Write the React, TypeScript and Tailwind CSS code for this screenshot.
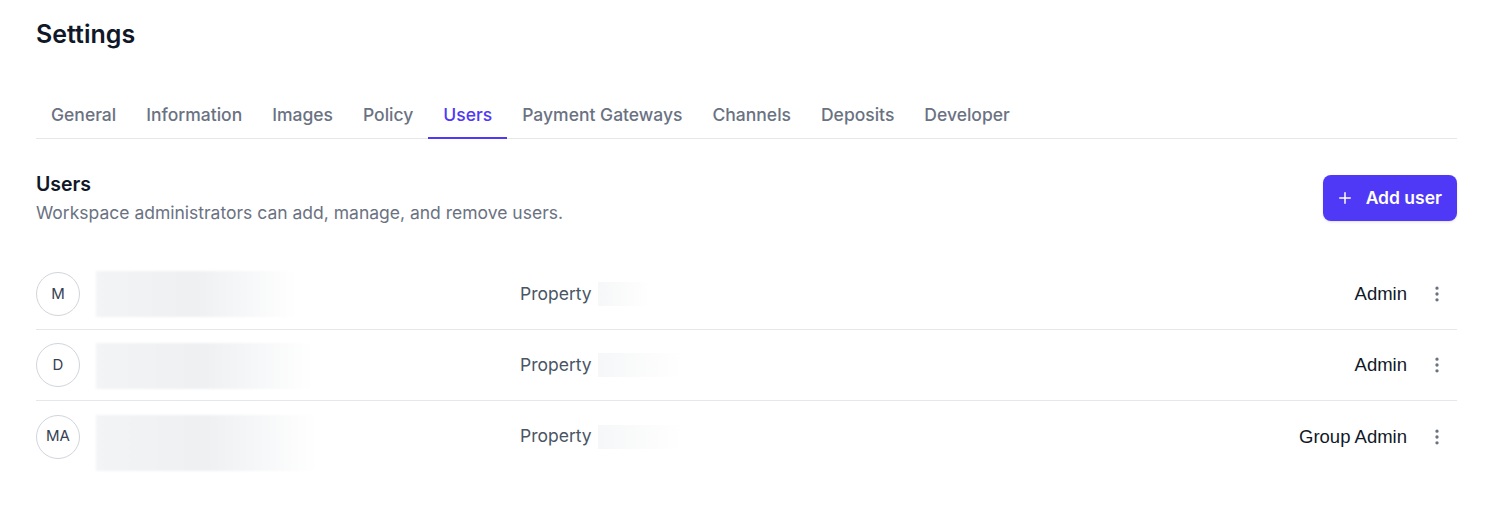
import { Plus, EllipsisVertical } from 'lucide-react'

const tabs = ['General', 'Information', 'Images', 'Policy', 'Users', 'Payment Gateways', 'Channels', 'Deposits', 'Developer']

const users = [
  { initials: 'M', block: 'w-[200px] h-[46px]', propW: 'w-[52px]', role: 'Admin' },
  { initials: 'D', block: 'w-[216px] h-[46px] mt-[2px]', propW: 'w-[86px]', role: 'Admin' },
  { initials: 'MA', block: 'w-[220px] h-[56px] mt-[12px]', propW: 'w-[86px]', role: 'Group Admin' },
]

export default function App() {
  return (
    <div className="min-h-screen bg-white pl-9 pr-10 pt-[18px] font-['Inter',sans-serif]">
      <h1 className="text-[25px] leading-8 font-semibold text-[#101828]">Settings</h1>

      <nav className="mt-[51px] flex border-b border-[#e5e7eb]">
        {tabs.map((t) => (
          <div
            key={t}
            className={
              t === 'Users'
                ? 'px-[15px] pb-[10px] pt-[2px] text-[17.5px] leading-6 font-medium text-[#4f39f6] border-b-2 border-[#4f39f6] -mb-px'
                : 'px-[15px] pb-[10px] pt-[2px] text-[17.5px] leading-6 font-medium text-[#6a7282]'
            }
          >
            {t}
          </div>
        ))}
      </nav>

      <div className="mt-[31px] flex items-start justify-between">
        <div>
          <h2 className="text-[19.5px] leading-7 font-semibold text-[#101828]">Users</h2>
          <p className="mt-[3px] text-[17.5px] leading-6 text-[#6a7282]">
            Workspace administrators can add, manage, and remove users.
          </p>
        </div>
        <button className="mt-[5px] flex h-[46px] items-center gap-[12px] rounded-lg bg-[#4f39f6] pl-[13px] pr-[15px] text-[17.5px] font-semibold text-white shadow-sm">
          <Plus size={18} strokeWidth={2} />
          Add user
        </button>
      </div>

      <div className="mt-[34px]">
        {users.map((u, i) => (
          <div
            key={i}
            className={
              i < users.length - 1
                ? 'flex h-[71px] items-center border-b border-[#e5e7eb]'
                : 'flex h-[71px] items-center'
            }
          >
            <div className="flex h-[44px] w-[44px] shrink-0 items-center justify-center rounded-full border border-[#d1d5dc] text-[15px] text-[#364153]">
              {u.initials}
            </div>
            <div className={`ml-[16px] ${u.block} shrink-0 bg-gradient-to-r from-[#f3f4f6] via-[#eef0f2] to-white blur-[1px]`} />
            <div className="ml-auto flex w-[937px] items-center">
              <span className="text-[17.5px] text-[#4a5565]">Property</span>
              <span className={`ml-[6px] h-[24px] ${u.propW} bg-gradient-to-r from-[#f6f7f8] to-white`} />
              <span className="ml-auto font-['Liberation_Sans',Arial,sans-serif] text-[18.5px] text-[#101828]">{u.role}</span>
              <button className="ml-[20px] mr-[10px] text-[#6a7282]">
                <EllipsisVertical size={20} strokeWidth={2} />
              </button>
            </div>
          </div>
        ))}
      </div>
    </div>
  )
}
